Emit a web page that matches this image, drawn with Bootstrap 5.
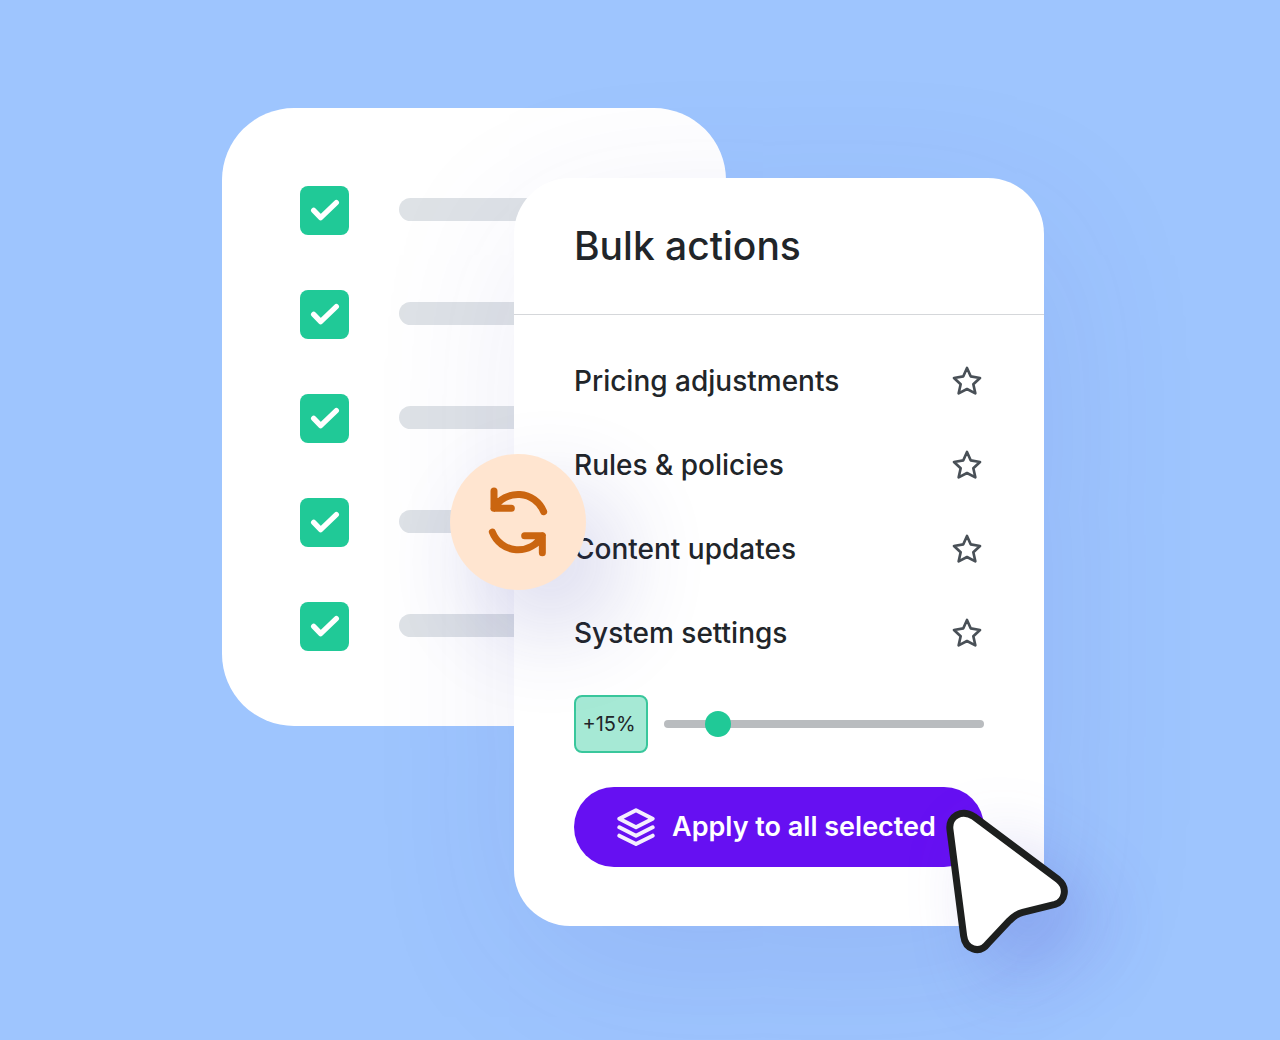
<!DOCTYPE html>
<html lang="en">
<head>
<meta charset="utf-8">
<meta name="viewport" content="width=device-width, initial-scale=1">
<title>Bulk actions</title>
<link href="https://cdn.jsdelivr.net/npm/bootstrap@5.3.0/dist/css/bootstrap.min.css" rel="stylesheet">
<style>
  body { background: #9ec5fe; font-family: Inter, "Liberation Sans", sans-serif; color: #212529; }
  .stage { padding: 108px 14px 114px 0; }
  .pick-panel { width: 504px; padding: 78px 78px 75px; gap: 55px; border-radius: 72px; }
  .pick-row { gap: 50px; }
  .form-check-input.pick-box { width: 49px; height: 49px; border: 0; border-radius: 8px; }
  .form-check-input.pick-box:checked {
    background-color: #20c997; background-size: 100% 100%;
    background-image: url("data:image/svg+xml,%3Csvg xmlns='http://www.w3.org/2000/svg' viewBox='60 48 147 147'%3E%3Cpath d='M101 121l21 22 47-45' fill='none' stroke='%23fff' stroke-width='16' stroke-linecap='round' stroke-linejoin='round'/%3E%3C/svg%3E");
  }
  .text-bone { height: 23px; margin-bottom: 2px; background: #dee2e6; }
  .action-panel { width: 530px; margin: 70px 0 0 -212px; border-radius: 56px; box-shadow: 8px 40px 160px rgba(60, 60, 180, .1); }
  .action-head { padding: 38px 60px; border-bottom: 1px solid #d5d7da; }
  .action-head h1 { font-size: 39px; line-height: 60px; font-weight: 500; }
  .action-body { padding: 24px 60px 59px; }
  .action-item { height: 84px; }
  .action-item a { font-size: 28px; line-height: 40px; font-weight: 500; color: #212529; }
  .ink { fill: none; stroke: currentColor; stroke-linecap: round; stroke-linejoin: round; }
  .star-btn { color: #495057; line-height: 0; }
  .adjust-row { margin-top: 20px; gap: 16px; }
  .percent-box { width: 74px; height: 58px; padding-right: 4px; font-size: 20px; line-height: 24px; background: #a6e9d5; border: 2px solid #39c79c; border-radius: 8px; }
  .form-range.adjust { height: 26px; }
  .adjust::-webkit-slider-runnable-track { height: 8px; background: #b9bcbf; }
  .adjust::-webkit-slider-thumb { width: 26px; height: 26px; margin-top: -9px; background: #20c997; }
  .adjust::-moz-range-track { height: 8px; background: #b9bcbf; }
  .adjust::-moz-range-thumb { width: 26px; height: 26px; background: #20c997; }
  .apply-btn { height: 80px; margin-top: 34px; padding: 0 42px; gap: 16px; background: #6610f2; font-size: 27px; line-height: 40px; font-weight: 600; }
  .sync-badge { left: -64px; top: 276px; width: 136px; height: 136px; background: #ffe5d0; color: #ca6510; box-shadow: 32px 40px 96px rgba(50, 50, 160, .2); }
  .pointer { left: 429px; top: 629px; filter: drop-shadow(32px 32px 36px rgba(80, 70, 200, .24)); pointer-events: none; }
</style>
</head>
<body>
<main class="stage d-flex justify-content-center align-items-start">
  <section class="pick-panel bg-white d-flex flex-column flex-shrink-0" aria-label="Selected items">
    <div class="pick-row d-flex align-items-center"><input class="form-check-input pick-box m-0 flex-shrink-0" type="checkbox" checked aria-label="Item 1"><span class="text-bone rounded-pill flex-grow-1"></span></div>
    <div class="pick-row d-flex align-items-center"><input class="form-check-input pick-box m-0 flex-shrink-0" type="checkbox" checked aria-label="Item 2"><span class="text-bone rounded-pill flex-grow-1"></span></div>
    <div class="pick-row d-flex align-items-center"><input class="form-check-input pick-box m-0 flex-shrink-0" type="checkbox" checked aria-label="Item 3"><span class="text-bone rounded-pill flex-grow-1"></span></div>
    <div class="pick-row d-flex align-items-center"><input class="form-check-input pick-box m-0 flex-shrink-0" type="checkbox" checked aria-label="Item 4"><span class="text-bone rounded-pill flex-grow-1"></span></div>
    <div class="pick-row d-flex align-items-center"><input class="form-check-input pick-box m-0 flex-shrink-0" type="checkbox" checked aria-label="Item 5"><span class="text-bone rounded-pill flex-grow-1"></span></div>
  </section>

  <section class="action-panel bg-white position-relative flex-shrink-0">
    <svg width="0" height="0" class="position-absolute" aria-hidden="true">
      <symbol id="star" viewBox="66 46 96 96"><path d="M111 55L122 80 150 85 130 104 136 131 111 118 86 131 92 104 72 85 100 80Z"/></symbol>
    </svg>
    <header class="action-head"><h1 class="m-0">Bulk actions</h1></header>
    <div class="action-body">
      <ul class="list-unstyled m-0">
        <li class="action-item d-flex align-items-center justify-content-between"><a class="text-decoration-none" href="#pricing">Pricing adjustments</a><button type="button" class="star-btn btn p-0 border-0" aria-label="Favorite pricing adjustments"><svg class="ink" width="32" height="32" stroke-width="8"><use href="#star"/></svg></button></li>
        <li class="action-item d-flex align-items-center justify-content-between"><a class="text-decoration-none" href="#rules">Rules &amp; policies</a><button type="button" class="star-btn btn p-0 border-0" aria-label="Favorite rules and policies"><svg class="ink" width="32" height="32" stroke-width="8"><use href="#star"/></svg></button></li>
        <li class="action-item d-flex align-items-center justify-content-between"><a class="text-decoration-none" href="#content">Content updates</a><button type="button" class="star-btn btn p-0 border-0" aria-label="Favorite content updates"><svg class="ink" width="32" height="32" stroke-width="8"><use href="#star"/></svg></button></li>
        <li class="action-item d-flex align-items-center justify-content-between"><a class="text-decoration-none" href="#system">System settings</a><button type="button" class="star-btn btn p-0 border-0" aria-label="Favorite system settings"><svg class="ink" width="32" height="32" stroke-width="8"><use href="#star"/></svg></button></li>
      </ul>
      <div class="adjust-row d-flex align-items-center">
        <output class="percent-box d-flex align-items-center justify-content-center flex-shrink-0" for="percent">+15%</output>
        <input id="percent" class="form-range adjust" type="range" min="0" max="107" value="15" aria-label="Price adjustment">
      </div>
      <button type="button" class="apply-btn btn text-white w-100 rounded-pill border-0 d-flex align-items-center text-nowrap">
        <svg class="ink flex-shrink-0" width="40" height="40" viewBox="168 380 120 120" stroke-width="12" opacity=".93" aria-hidden="true"><path d="M228 390L278 415 228 441 178 415ZM178 441L228 466 278 441M178 466L228 491 278 466"/></svg>
        Apply to all selected
      </button>
    </div>
    <div class="sync-badge position-absolute rounded-circle">
      <svg class="ink d-block" width="136" height="136" viewBox="30 42 408 408" stroke-width="21" aria-hidden="true"><path d="M162 153V205H214M162 205A83 83 0 0 1 311 215M157 276A83 83 0 0 0 307 287M254 287H307V338"/></svg>
    </div>
    <svg class="pointer position-absolute overflow-visible" width="130" height="150" viewBox="69 51 390 450" aria-hidden="true">
      <path d="M90 120C84 78 126 56 162 80L415 269C444 292 436 334 405 343L308 367C292 371 280 380 268 392L204 460C178 494 136 478 131 438Z" fill="#fff" stroke="#1d1f1e" stroke-width="21" stroke-linejoin="round"/>
    </svg>
  </section>
</main>
<script src="https://cdn.jsdelivr.net/npm/bootstrap@5.3.0/dist/js/bootstrap.bundle.min.js"></script>
</body>
</html>
